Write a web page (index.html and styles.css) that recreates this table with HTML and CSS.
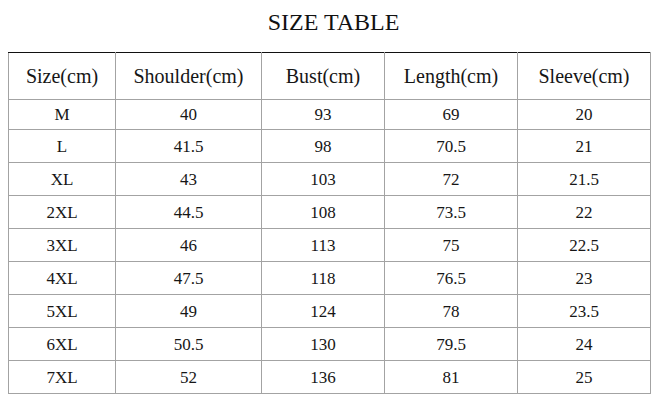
FILE: index.html
```html
<!DOCTYPE html>
<html>
<head>
<meta charset="utf-8">
<link rel="stylesheet" href="styles.css">
</head>
<body>
<h1 class="title">SIZE TABLE</h1>
<table class="sizes">
  <colgroup>
    <col class="c1"><col class="c2"><col class="c3"><col class="c4"><col class="c5">
  </colgroup>
  <thead>
    <tr class="head"><th>Size(cm)</th><th>Shoulder(cm)</th><th>Bust(cm)</th><th>Length(cm)</th><th>Sleeve(cm)</th></tr>
  </thead>
  <tbody>
    <tr class="first"><td>M</td><td>40</td><td>93</td><td>69</td><td>20</td></tr>
    <tr><td>L</td><td>41.5</td><td>98</td><td>70.5</td><td>21</td></tr>
    <tr><td>XL</td><td>43</td><td>103</td><td>72</td><td>21.5</td></tr>
    <tr><td>2XL</td><td>44.5</td><td>108</td><td>73.5</td><td>22</td></tr>
    <tr><td>3XL</td><td>46</td><td>113</td><td>75</td><td>22.5</td></tr>
    <tr><td>4XL</td><td>47.5</td><td>118</td><td>76.5</td><td>23</td></tr>
    <tr><td>5XL</td><td>49</td><td>124</td><td>78</td><td>23.5</td></tr>
    <tr><td>6XL</td><td>50.5</td><td>130</td><td>79.5</td><td>24</td></tr>
    <tr><td>7XL</td><td>52</td><td>136</td><td>81</td><td>25</td></tr>
  </tbody>
</table>
</body>
</html>
```
FILE: styles.css
```css
html, body {
  margin: 0;
  padding: 0;
  background: #ffffff;
}
body {
  font-family: "Liberation Serif", "Times New Roman", serif;
  color: #161616;
}
.title {
  margin: 0;
  padding: 10px 0 0 8px;
  height: 52px;
  box-sizing: border-box;
  font-family: "Liberation Serif", "Times New Roman", serif;
  font-size: 24px;
  line-height: 24px;
  font-weight: normal;
  text-align: center;
  color: #111;
}
.sizes {
  margin-left: 8px;
  border-collapse: collapse;
  table-layout: fixed;
  width: 642px;
  font-family: "Liberation Serif", "Times New Roman", serif;
}
.c1 { width: 107px; }
.c2 { width: 146px; }
.c3 { width: 123px; }
.c4 { width: 133px; }
.c5 { width: 133px; }
.sizes th, .sizes td {
  border: 1px solid #a3a3a3;
  padding: 0;
  text-align: center;
  vertical-align: middle;
  font-weight: normal;
  font-family: "Liberation Serif", "Times New Roman", serif;
  color: #161616;
}
.sizes th {
  border-top: 1px solid #111;
  height: 46px;
  font-size: 20px;
  line-height: 20px;
}
.sizes td {
  height: 32px;
  font-size: 17px;
  line-height: 17px;
}
.sizes tr.first td {
  height: 29px;
}
```
